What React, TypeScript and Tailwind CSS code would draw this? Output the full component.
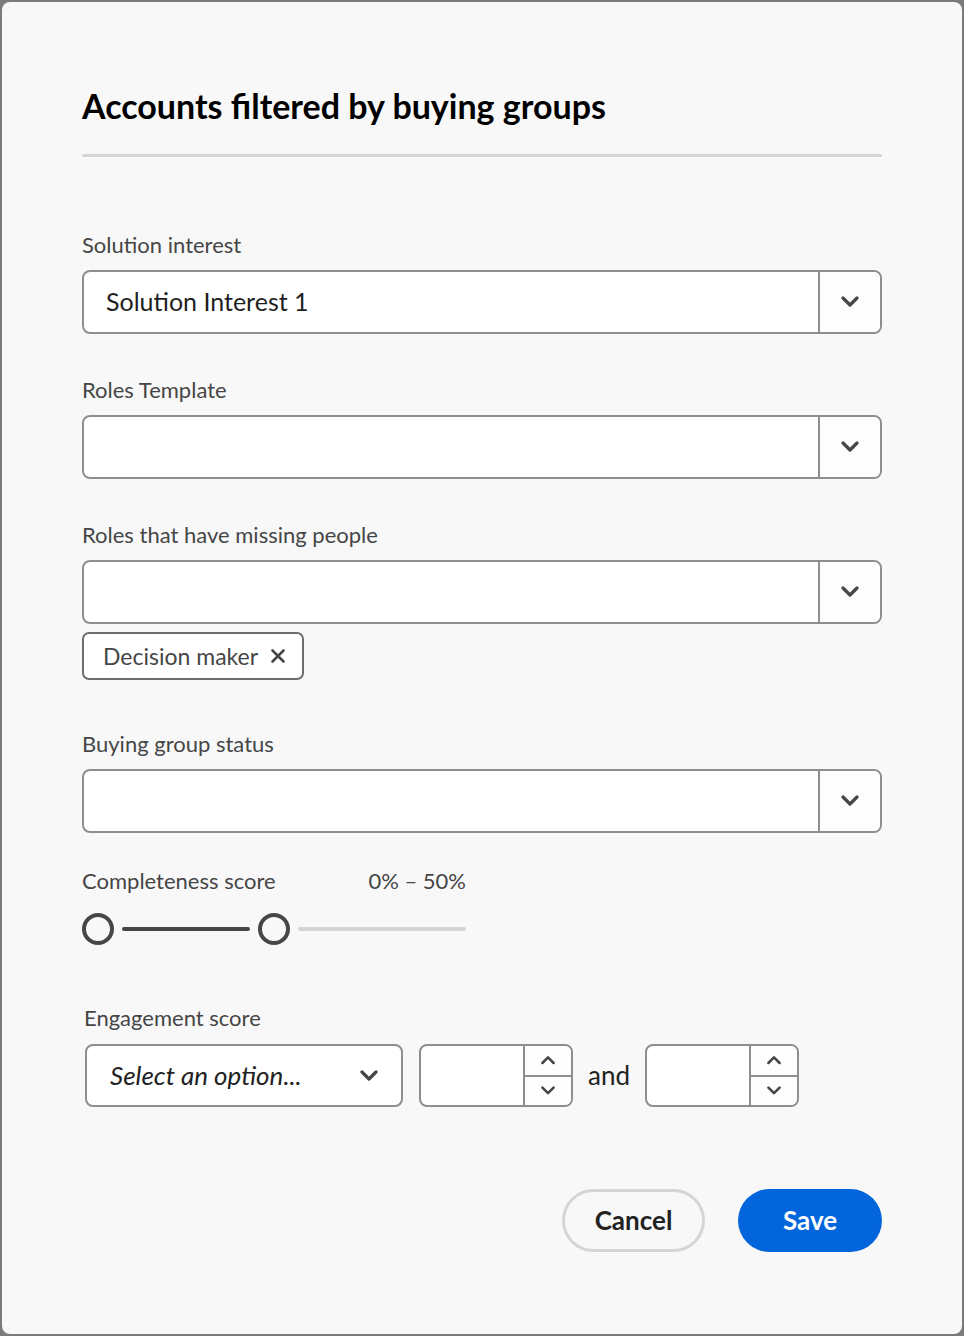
import React from "react";

const font = { fontFamily: "Lato, 'Noto Sans', sans-serif" };

const Chevron = ({ up = false, size = 20 }: { up?: boolean; size?: number }) => (
  <svg width={size} height={size * 0.6} viewBox="0 0 20 12" fill="none">
    <path
      d={up ? "M3 10 L10 3 L17 10" : "M3 2 L10 9 L17 2"}
      stroke="#464646"
      strokeWidth={3.2}
      strokeLinecap="round"
      strokeLinejoin="round"
    />
  </svg>
);

const Label = ({ children, className = "" }: { children: React.ReactNode; className?: string }) => (
  <div className={`text-[22px] leading-[28px] text-[#464646] ${className}`}>{children}</div>
);

const ComboBox = ({ value }: { value?: string }) => (
  <div className="flex h-[64px] w-full rounded-[8px] border-2 border-[#8e8e8e] bg-white overflow-hidden">
    <div className="flex flex-1 items-center px-[22px] text-[25px] text-[#1f1f1f]">{value}</div>
    <div className="flex w-[62px] items-center justify-center border-l-2 border-[#8e8e8e] bg-[#fdfdfd]">
      <Chevron />
    </div>
  </div>
);

const NumberField = () => (
  <div className="flex h-[63px] w-[154px] rounded-[8px] border-2 border-[#8e8e8e] bg-white overflow-hidden">
    <div className="flex-1" />
    <div className="flex w-[48px] flex-col border-l-2 border-[#8e8e8e] bg-[#fdfdfd]">
      <div className="flex flex-1 items-center justify-center border-b-2 border-[#8e8e8e]">
        <Chevron up size={16} />
      </div>
      <div className="flex flex-1 items-center justify-center">
        <Chevron size={16} />
      </div>
    </div>
  </div>
);

export default function App() {
  return (
    <div className="h-[1336px] w-[964px] bg-[#7b7b7b] p-[2px]" style={font}>
      <div className="flex h-full w-full flex-col rounded-[8px] bg-[#f8f8f8] px-[80px] pt-[84px]">
        {/* Header */}
        <h1 className="text-[34px] font-bold leading-[40px] text-black">Accounts filtered by buying groups</h1>
        <div className="mt-[28px] h-[3px] w-full rounded-full bg-[#d5d5d5]" />

        {/* Fields */}
        <Label className="mt-[74px]">Solution interest</Label>
        <div className="mt-[11px]">
          <ComboBox value="Solution Interest 1" />
        </div>

        <Label className="mt-[42px]">Roles Template</Label>
        <div className="mt-[11px]">
          <ComboBox />
        </div>

        <Label className="mt-[42px]">Roles that have missing people</Label>
        <div className="mt-[11px]">
          <ComboBox />
        </div>
        <div className="mt-[8px] flex">
          <div className="flex h-[48px] items-center gap-[12px] rounded-[7px] border-2 border-[#6e6e6e] bg-white pl-[19px] pr-[16px]">
            <span className="text-[23px] text-[#464646]">Decision maker</span>
            <svg width="16" height="16" viewBox="0 0 16 16">
              <path d="M2.5 2.5 L13.5 13.5 M13.5 2.5 L2.5 13.5" stroke="#464646" strokeWidth="2.6" strokeLinecap="round" />
            </svg>
          </div>
        </div>

        <Label className="mt-[50px]">Buying group status</Label>
        <div className="mt-[11px]">
          <ComboBox />
        </div>

        {/* Completeness slider */}
        <div className="mt-[34px] flex w-[384px] justify-between">
          <Label>Completeness score</Label>
          <Label>0% – 50%</Label>
        </div>
        <div className="mt-[18px] flex h-[32px] w-[384px] items-center">
          <div className="h-[32px] w-[32px] rounded-full border-[4px] border-[#464646]" />
          <div className="mx-[8px] h-[4px] w-[128px] rounded-full bg-[#464646]" />
          <div className="h-[32px] w-[32px] rounded-full border-[4px] border-[#464646]" />
          <div className="ml-[8px] h-[4px] flex-1 rounded-full bg-[#d5d5d5]" />
        </div>

        {/* Engagement score */}
        <Label className="mt-[59px] ml-[2px]">Engagement score</Label>
        <div className="mt-[12px] ml-[3px] flex items-center">
          <div className="flex h-[63px] w-[318px] items-center justify-between rounded-[8px] border-2 border-[#8e8e8e] bg-white pl-[23px] pr-[22px]">
            <span className="text-[26px] italic text-[#222]">Select an option...</span>
            <Chevron />
          </div>
          <div className="ml-[16px]">
            <NumberField />
          </div>
          <span className="mx-[15px] text-[26px] text-[#222]">and</span>
          <NumberField />
        </div>

        {/* Actions */}
        <div className="mt-[82px] flex justify-end gap-[33px]">
          <button className="h-[63px] w-[143px] rounded-full border-[3px] border-[#d5d5d5] text-[26px] font-bold text-[#222]">
            Cancel
          </button>
          <button className="h-[63px] w-[144px] rounded-full bg-[#0265dc] text-[26px] font-bold text-white">Save</button>
        </div>
      </div>
    </div>
  );
}
